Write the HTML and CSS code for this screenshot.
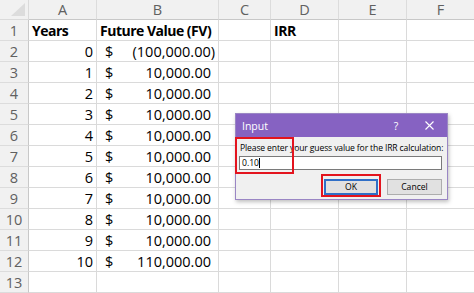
FILE: index.html
```html
<!DOCTYPE html>
<html>
<head>
<meta charset="utf-8">
<link rel="stylesheet" href="styles.css">
</head>
<body>
<div class="sheet">
  <div class="corner hdr"><span class="tri"></span></div>
  <div class="hdr col">A</div>
  <div class="hdr col">B</div>
  <div class="hdr col">C</div>
  <div class="hdr col">D</div>
  <div class="hdr col">E</div>
  <div class="hdr col last">F</div>

  <div class="hdr row">1</div>
  <div class="cell bold">Years</div>
  <div class="cell bold">Future Value (FV)</div>
  <div class="cell"></div>
  <div class="cell bold">IRR</div>
  <div class="cell"></div>
  <div class="cell last"></div>

  <div class="hdr row">2</div>
  <div class="cell num">0</div>
  <div class="cell acct"><span>$</span><span>(100,000.00)</span></div>
  <div class="cell"></div><div class="cell"></div><div class="cell"></div><div class="cell last"></div>

  <div class="hdr row">3</div>
  <div class="cell num">1</div>
  <div class="cell acct"><span>$</span><span class="pos">10,000.00</span></div>
  <div class="cell"></div><div class="cell"></div><div class="cell"></div><div class="cell last"></div>

  <div class="hdr row">4</div>
  <div class="cell num">2</div>
  <div class="cell acct"><span>$</span><span class="pos">10,000.00</span></div>
  <div class="cell"></div><div class="cell"></div><div class="cell"></div><div class="cell last"></div>

  <div class="hdr row">5</div>
  <div class="cell num">3</div>
  <div class="cell acct"><span>$</span><span class="pos">10,000.00</span></div>
  <div class="cell"></div><div class="cell"></div><div class="cell"></div><div class="cell last"></div>

  <div class="hdr row">6</div>
  <div class="cell num">4</div>
  <div class="cell acct"><span>$</span><span class="pos">10,000.00</span></div>
  <div class="cell"></div><div class="cell"></div><div class="cell"></div><div class="cell last"></div>

  <div class="hdr row">7</div>
  <div class="cell num">5</div>
  <div class="cell acct"><span>$</span><span class="pos">10,000.00</span></div>
  <div class="cell"></div><div class="cell"></div><div class="cell"></div><div class="cell last"></div>

  <div class="hdr row">8</div>
  <div class="cell num">6</div>
  <div class="cell acct"><span>$</span><span class="pos">10,000.00</span></div>
  <div class="cell"></div><div class="cell"></div><div class="cell"></div><div class="cell last"></div>

  <div class="hdr row">9</div>
  <div class="cell num">7</div>
  <div class="cell acct"><span>$</span><span class="pos">10,000.00</span></div>
  <div class="cell"></div><div class="cell"></div><div class="cell"></div><div class="cell last"></div>

  <div class="hdr row">10</div>
  <div class="cell num">8</div>
  <div class="cell acct"><span>$</span><span class="pos">10,000.00</span></div>
  <div class="cell"></div><div class="cell"></div><div class="cell"></div><div class="cell last"></div>

  <div class="hdr row">11</div>
  <div class="cell num">9</div>
  <div class="cell acct"><span>$</span><span class="pos">10,000.00</span></div>
  <div class="cell"></div><div class="cell"></div><div class="cell"></div><div class="cell last"></div>

  <div class="hdr row">12</div>
  <div class="cell num">10</div>
  <div class="cell acct"><span>$</span><span class="pos">110,000.00</span></div>
  <div class="cell"></div><div class="cell"></div><div class="cell"></div><div class="cell last"></div>

  <div class="hdr row">13</div>
  <div class="cell"></div><div class="cell"></div><div class="cell"></div><div class="cell"></div><div class="cell"></div><div class="cell last"></div>
</div>

<div class="dialog">
  <div class="titlebar">
    <span class="title">Input</span>
    <span class="help">?</span>
    <span class="close"><svg width="9" height="9" viewBox="0 0 9 9"><path d="M0.5 0.5 L8.5 8.5 M8.5 0.5 L0.5 8.5" stroke="#ffffff" stroke-width="1.1" fill="none"/></svg></span>
  </div>
  <div class="body">
    <div class="prompt">Please enter your guess value for the IRR calculation:</div>
    <div class="input">0.10<span class="caret"></span></div>
    <div class="buttons">
      <div class="btn ok">OK</div>
      <div class="btn">Cancel</div>
    </div>
  </div>
  <div class="mark mark-input"></div>
  <div class="mark mark-ok"></div>
</div>
</body>
</html>
```

FILE: styles.css
```css
html, body {
  margin: 0;
  padding: 0;
  background: #ffffff;
  overflow: hidden;
}

body {
  width: 474px;
  height: 293px;
  position: relative;
  font-family: "Open Sans", "Noto Sans", sans-serif;
}

.sheet {
  display: grid;
  grid-template-columns: 29px 68px 122px 52px 68px 68px 67px;
  grid-template-rows: 20px repeat(13, 21px);
  font-size: 14.5px;
  color: #000;
}

.sheet > div {
  box-sizing: border-box;
  border-right: 1px solid #dadada;
  border-bottom: 1px solid #dadada;
  display: flex;
  align-items: center;
  white-space: nowrap;
  overflow: visible;
}

.sheet > div.last {
  border-right: none;
}

.hdr {
  background: #f1f1f1;
  color: #606060;
  justify-content: center;
}

.sheet > .hdr.col {
  border-bottom-color: #c8c8c8;
  border-right-color: #dcdcdc;
  font-size: 14.5px;
}

.sheet > .hdr.row {
  border-right-color: #c8c8c8;
  border-bottom-color: #dcdcdc;
}

.corner {
  position: relative;
}

.corner .tri {
  position: absolute;
  right: 3px;
  bottom: 3px;
  width: 0;
  height: 0;
  border-left: 14px solid transparent;
  border-bottom: 13px solid #dcdcdc;
}

.cell {
  padding: 0 3px;
}

.bold {
  font-weight: 700;
  font-size: 14px;
  letter-spacing: -0.5px;
}

.num {
  justify-content: flex-end;
}

.acct {
  justify-content: space-between;
  padding: 0 3px 0 8px;
}

.acct .pos {
  padding-right: 4px;
}

/* dialog */
.dialog {
  position: absolute;
  left: 235px;
  top: 113px;
  width: 213px;
  height: 87px;
  box-sizing: border-box;
  border: 1px solid #9a86c4;
  background: #f0f0f0;
  box-shadow: 1px 2px 4px rgba(0,0,0,0.25);
  font-family: "Open Sans", "Noto Sans", sans-serif;
  display: flex;
  flex-direction: column;
}

.titlebar {
  height: 23px;
  background: #8662c2;
  color: #fff;
  display: flex;
  align-items: center;
  padding: 0 0 0 6px;
  font-size: 10.5px;
}

.title {
  flex: 1;
}

.help {
  width: 30px;
  text-align: center;
  font-size: 10.5px;
}

.close {
  width: 36px;
  display: flex;
  justify-content: center;
  align-items: center;
}

.body {
  flex: 1;
  padding: 5px 5px 0 3px;
  display: flex;
  flex-direction: column;
}

.prompt {
  font-size: 8.6px;
  color: #000;
  white-space: nowrap;
  letter-spacing: -0.14px;
  padding-left: 1px;
}

.input {
  margin-top: 2px;
  height: 14px;
  box-sizing: border-box;
  border: 1px solid #7a7a7a;
  background: #fff;
  font-size: 8.6px;
  display: flex;
  align-items: center;
  padding-left: 2px;
}

.caret {
  display: inline-block;
  width: 1px;
  height: 10px;
  background: #000;
}

.buttons {
  display: flex;
  justify-content: flex-end;
  gap: 9px;
  margin-top: 9px;
}

.btn {
  width: 55px;
  height: 16px;
  box-sizing: border-box;
  background: #e1e1e1;
  border: 1px solid #adadad;
  font-size: 8.6px;
  display: flex;
  align-items: center;
  justify-content: center;
}

.btn.ok {
  border: 2px solid #2f6fc7;
  width: 54px;
}

.mark {
  position: absolute;
  border: 2px solid #e3141e;
  box-sizing: border-box;
}

.mark-input {
  left: -1px;
  top: 23px;
  width: 59px;
  height: 37px;
}

.mark-ok {
  left: 85px;
  top: 60px;
  width: 60px;
  height: 23px;
}
```
